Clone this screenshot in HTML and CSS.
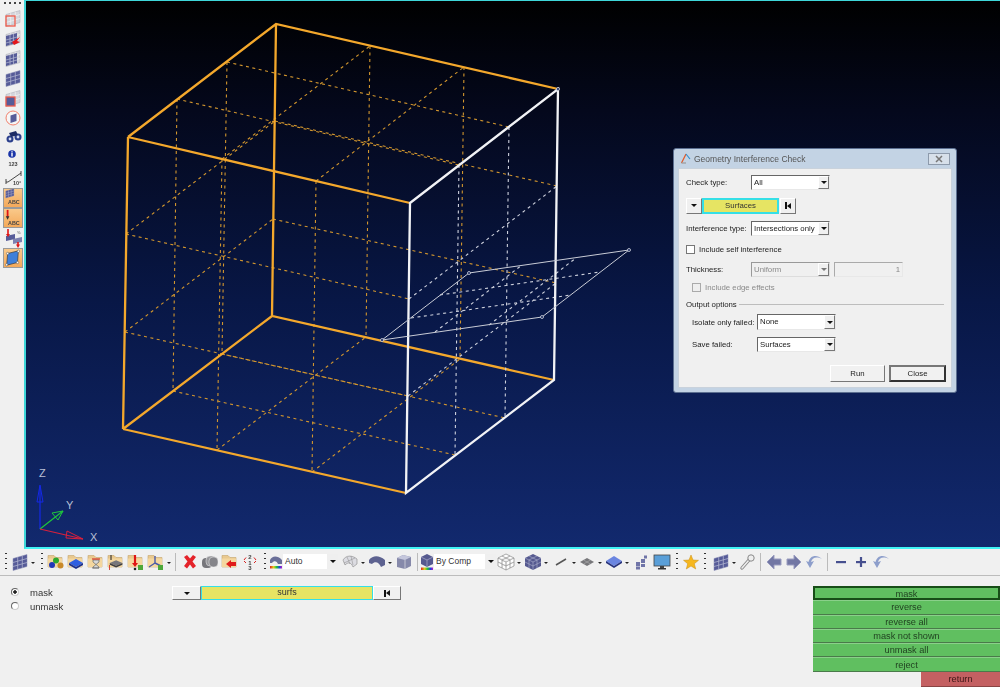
FILE: index.html
```html
<!DOCTYPE html>
<html lang="en">
<head>
<meta charset="utf-8">
<title>Geometry Interference Check</title>
<link rel="stylesheet" href="styles.css">
</head>
<body>
<svg class="defs" width="0" height="0" aria-hidden="true">
  <defs>
    <symbol id="mesh" viewBox="0 0 20 20">
      <path d="M3 6.500 17 2.500V14.500L3 18.500Z" fill="#565b98" stroke="#8b8fb5" stroke-width=".5"/>
      <path d="M7.700 5.200V17.200M12.300 3.800V15.800M3 10.500 17 6.500M3 14.500 17 10.500" stroke="#b8bbd4" stroke-width=".7" fill="none"/>
    </symbol>
    <symbol id="meshpale" viewBox="0 0 20 20">
      <path d="M3 6.500 17 2.500V14.500L3 18.500Z" fill="#d5d6dc" stroke="#a9abb5" stroke-width=".5"/>
      <path d="M7.700 5.200V17.200M12.300 3.800V15.800M3 10.500 17 6.500M3 14.500 17 10.500" stroke="#f4f4f4" stroke-width=".7" fill="none"/>
    </symbol>
    <symbol id="meshhalf" viewBox="0 0 20 20">
      <use href="#meshpale" width="20" height="20"/>
      <path d="M3 8 14 5V15L3 18Z" fill="#565b98"/>
      <path d="M7 7V17M10.500 6V16M3 12 14 9M3 15 14 12" stroke="#b8bbd4" stroke-width=".7" fill="none"/>
    </symbol>
    <symbol id="folder" viewBox="0 0 20 20">
      <path d="M2 3.500H8L10 5.500H16V15H2Z" fill="#e9c98f" stroke="#c5a56c" stroke-width=".6"/>
      <path d="M2 6.500H16V15H2Z" fill="#f4d79f"/>
    </symbol>
    <symbol id="block" viewBox="0 0 20 20">
      <path d="M2 10 9 7 16 10 9 13Z" fill="#77777c"/>
      <path d="M2 10V12L9 15 16 12V10L9 13Z" fill="#3f3f44"/>
    </symbol>
    <symbol id="caretdown" viewBox="0 0 6 20"><path d="M1 10H5L3 12Z" fill="#222"/></symbol>
    <symbol id="curve" viewBox="0 0 20 20">
      <path d="M18 7C12 4 8 6 7 10L10 9 6 16 2 9 4.500 10C6 3 13 2 18 7Z" fill="#8d9ecb"/>
    </symbol>
    <linearGradient id="rainbow"><stop offset="0" stop-color="#e02020"/><stop offset=".3" stop-color="#e0d020"/><stop offset=".55" stop-color="#20c040"/><stop offset=".8" stop-color="#2040e0"/><stop offset="1" stop-color="#c020c0"/></linearGradient>
  </defs>
</svg>

<div class="workspace">
  <aside class="sidebar">
    <div class="grip-h"></div>
    <svg class="side-ic" viewBox="0 0 20 20"><use href="#meshpale" width="20" height="20"/><rect x="3" y="8" width="9" height="10" fill="none" stroke="#ee5a4a" stroke-width="1.300"/></svg>
    <svg class="side-ic" viewBox="0 0 20 20"><use href="#meshhalf" width="20" height="20"/><path d="M9 14 17 9 14 13 17 14 11 17Z" fill="#e3161b"/></svg>
    <svg class="side-ic" viewBox="0 0 20 20"><use href="#meshhalf" width="20" height="20"/></svg>
    <svg class="side-ic" viewBox="0 0 20 20"><use href="#mesh" width="20" height="20"/></svg>
    <svg class="side-ic" viewBox="0 0 20 20"><use href="#meshpale" width="20" height="20"/><rect x="3" y="9" width="9" height="9" fill="#565b98" stroke="#ee5a4a" stroke-width="1.300"/></svg>
    <svg class="side-ic" viewBox="0 0 20 20"><circle cx="10" cy="10" r="7" fill="#f6f6f6" stroke="#f0806c" stroke-width="1"/><path d="M7.500 7.500 13.500 5.500V13L7.500 15Z" fill="#565b98"/></svg>
    <svg class="side-ic" viewBox="0 0 20 20"><circle cx="7" cy="11" r="3.500" fill="#2b3f8c"/><circle cx="15" cy="9" r="3.500" fill="#2b3f8c"/><path d="M6 5 13 3 15 7 8 9Z" fill="#1d2c66"/><circle cx="7" cy="11" r="1.400" fill="#d6dcf0"/><circle cx="15" cy="9" r="1.400" fill="#d6dcf0"/></svg>
    <svg class="side-ic" viewBox="0 0 20 20"><circle cx="9" cy="6" r="3.800" fill="#1a35a8"/><rect x="8.300" y="5" width="1.400" height="3.500" fill="#fff"/><rect x="8.300" y="3.300" width="1.400" height="1.200" fill="#fff"/><text x="10" y="17.500" class="svg-small" text-anchor="middle">123</text></svg>
    <svg class="side-ic" viewBox="0 0 20 20"><path d="M3 14H5L18 5" fill="none" stroke="#333" stroke-width=".9"/><path d="M3 11V16M18 3V8" stroke="#333" stroke-width=".9"/><text x="10" y="17" class="svg-small">10°</text></svg>
    <div class="side-btn"><svg viewBox="0 0 20 20"><use href="#mesh" x="0" y="-2" width="13" height="13"/><text x="11" y="17" class="svg-abc" text-anchor="middle">ABC</text></svg></div>
    <div class="side-btn"><svg viewBox="0 0 20 20"><path d="M4 1V9" stroke="#e01515" stroke-width="2"/><path d="M2 8H6L4 12Z" fill="#333"/><text x="11" y="18" class="svg-abc" text-anchor="middle">ABC</text></svg></div>
    <svg class="side-ic" viewBox="0 0 20 20"><path d="M3 8 12 6V11L3 13Z" fill="#565b98"/><path d="M10 11 19 9V14L10 16Z" fill="#7d81b0"/><path d="M5 1V7" stroke="#e01515" stroke-width="1.600"/><path d="M3 6H7L5 9Z" fill="#e01515"/><path d="M15 14V18" stroke="#e01515" stroke-width="1.600"/><path d="M13 16.500H17L15 20Z" fill="#e01515"/><text x="14" y="6" class="svg-tiny">%</text></svg>
    <div class="side-btn side-btn-tall"><svg viewBox="0 0 20 20"><path d="M4 5 16 2 15 15 3 18Z" fill="#3f7fd8" stroke="#333" stroke-width=".7"/><circle cx="4" cy="5" r="1.300" fill="#fff" stroke="#333" stroke-width=".5"/><circle cx="16" cy="2.500" r="1.300" fill="#fff" stroke="#333" stroke-width=".5"/><circle cx="15" cy="15" r="1.300" fill="#fff" stroke="#333" stroke-width=".5"/><circle cx="3" cy="17.500" r="1.300" fill="#fff" stroke="#333" stroke-width=".5"/></svg></div>
  </aside>

  <main class="viewport">
    <svg class="scene" viewBox="26 1 974 546" aria-label="Cube model with a plate surface">
      <g class="dash-orange">
        <path d="M222 159 370 46M316 181 464 67M177 99 459 165M227 62 509 127"/>
        <path d="M217 450 366 337M312 472 460 359M173 391 455 455M222 354 505 418"/>
        <path d="M222 159 217 450M316 181 312 472M126 234 409 299M125 332 408 396"/>
        <path d="M370 46 366 337M464 67 460 359M275 121 557 186M273 219 556 283"/>
        <path d="M177 99 173 391M227 62 222 354M126 234 275 121M125 332 273 219"/>
      </g>
      <g class="edge-orange">
        <path d="M128 137 276 24 558 89M128 137 410 203M128 137 123 429M276 24 272 316M123 429 406 493M123 429 272 316 554 380"/>
      </g>
      <g class="dash-white">
        <path d="M459 165 455 455M509 127 505 418M409 299 557 186M408 396 556 283"/>
        <path d="M411 318 571 295M440 295 600 272M435 332 522 265M489 325 576 258"/>
      </g>
      <g class="edge-white">
        <path d="M410 203 558 89 554 380 406 493ZM410 203 406 493"/>
      </g>
      <path class="plate" d="M382 340 469 273 629 250 542 317Z"/>
      <g class="vertex">
        <circle cx="382" cy="340" r="1.500"/><circle cx="469" cy="273" r="1.500"/><circle cx="629" cy="250" r="1.500"/><circle cx="542" cy="317" r="1.500"/><circle cx="558" cy="89" r="1.500"/>
      </g>
      <g class="axes">
        <path d="M40 529V486" class="axis-z"/><path d="M37 502 40 485 43 502Z" class="head-z"/>
        <path d="M40 529 63 511" class="axis-y"/><path d="M52 513 63 511 58 520Z" class="head-y"/>
        <path d="M40 529 83 539" class="axis-x"/><path d="M67 531 83 539 66 538Z" class="head-x"/>
        <text x="39" y="477" class="axis-label">Z</text>
        <text x="66" y="509" class="axis-label">Y</text>
        <text x="90" y="541" class="axis-label">X</text>
      </g>
    </svg>

    <section class="dialog">
      <header class="dialog-title">
        <svg class="dialog-logo" viewBox="0 0 12 12"><path d="M6 1 1.500 10" stroke="#e05a2a" stroke-width="1.300" fill="none"/><path d="M6 1 10 6" stroke="#2f8fd0" stroke-width="1.200" fill="none"/><path d="M1.500 10H6" stroke="#999" stroke-width="1.200"/></svg>
        <span class="dialog-name">Geometry Interference Check</span>
        <span class="dialog-close">
          <svg viewBox="0 0 10 8" class="dialog-x"><path d="M2 1 8 7M8 1 2 7" stroke="#777" stroke-width="1.500"/></svg>
        </span>
      </header>
      <div class="dialog-body">
        <div class="row row-1">
          <label class="lbl">Check type:</label>
          <div class="combo"><span class="combo-val">All</span><span class="combo-btn"><i class="tri"></i></span></div>
        </div>
        <div class="row row-picker">
          <span class="mini-btn mini-drop"><i class="tri"></i></span>
          <span class="picker">Surfaces</span>
          <span class="mini-btn mini-reset"><i class="bar"></i><i class="tri-left"></i></span>
        </div>
        <div class="row row-picker">
          <label class="lbl">Interference type:</label>
          <div class="combo"><span class="combo-val">Intersections only</span><span class="combo-btn"><i class="tri"></i></span></div>
        </div>
        <div class="row row-check">
          <span class="check"></span><span>Include self interference</span>
        </div>
        <div class="row row-thick">
          <label class="lbl">Thickness:</label>
          <div class="combo combo-off"><span class="combo-val">Uniform</span><span class="combo-btn"><i class="tri"></i></span></div>
          <span class="field-off">1</span>
        </div>
        <div class="row row-check2 off">
          <span class="check check-off"></span><span>Include edge effects</span>
        </div>
        <div class="row row-group"><span>Output options</span><span class="group-rule"></span></div>
        <div class="row row-sub row-iso">
          <label class="lbl">Isolate only failed:</label>
          <div class="combo combo-tall"><span class="combo-val">None</span><span class="combo-btn"><i class="tri"></i></span></div>
        </div>
        <div class="row row-sub row-save">
          <label class="lbl">Save failed:</label>
          <div class="combo"><span class="combo-val">Surfaces</span><span class="combo-btn"><i class="tri"></i></span></div>
        </div>
        <div class="row row-actions">
          <button class="push">Run</button>
          <button class="push push-default">Close</button>
        </div>
      </div>
    </section>
  </main>
</div>

<nav class="toolbar">
  <span class="grip"></span>
  <svg class="ic"><use href="#mesh" width="20" height="20"/></svg><svg class="cd"><use href="#caretdown" width="6" height="20"/></svg>
  <span class="grip m2"></span>
  <svg class="ic" viewBox="0 0 20 20"><use href="#folder" width="20" height="20"/><circle cx="10" cy="8.500" r="3" fill="#2da82d"/><circle cx="6" cy="13" r="3" fill="#2238b8"/><circle cx="14.500" cy="13.500" r="3" fill="#c98a2a"/></svg>
  <svg class="ic" viewBox="0 0 20 20"><use href="#folder" width="20" height="20"/><path d="M3 11 10 7 17 11 10 15Z" fill="#2f5fe0"/><path d="M3 11V13L10 17 17 13V11L10 15Z" fill="#1a2f8c"/></svg>
  <svg class="ic" viewBox="0 0 20 20"><use href="#folder" width="20" height="20"/><path d="M6 16H13M7 8H13V10L10 12.500 13 15V16H7V15L10 12.500 7 10Z" fill="#d8d8d8" stroke="#555" stroke-width=".6"/><path d="M6 7H14" stroke="#d4352a" stroke-width="1.200"/></svg>
  <svg class="ic" viewBox="0 0 20 20"><use href="#folder" width="20" height="20"/><use href="#block" y="2" x="2" width="18" height="18"/><path d="M5 3V8" stroke="#222" stroke-width="1"/><path d="M3.500 13V18" stroke="#d4352a" stroke-width=".9"/></svg>
  <svg class="ic" viewBox="0 0 20 20"><use href="#folder" width="20" height="20"/><path d="M9 3V12" stroke="#e01515" stroke-width="2.200"/><path d="M6 11H12L9 15Z" fill="#e01515"/><circle cx="9" cy="17" r="1.300" fill="#222"/><rect x="12" y="13" width="5" height="5" fill="#4da83a"/></svg>
  <svg class="ic" viewBox="0 0 20 20"><use href="#folder" width="20" height="20"/><path d="M9 4V11L3 15M9 11 15 14" stroke="#4a5aa8" stroke-width="1.400" fill="none"/><rect x="12" y="13" width="5" height="5" fill="#4da83a"/></svg>
  <svg class="cd"><use href="#caretdown" width="6" height="20"/></svg>
  <span class="sep"></span>
  <svg class="ic m2" viewBox="0 0 20 20"><path d="M4 5 7 3 10 6.500 13 3 16 5 12.500 9.500 16 14 13 16.500 10 12.500 7 16.500 4 14 7.500 9.500Z" fill="#e4232a"/></svg>
  <svg class="ic" viewBox="0 0 20 20"><rect x="2" y="6" width="10" height="10" rx="4" fill="#77777c"/><rect x="6" y="4" width="10" height="10" rx="4" fill="#98989c" stroke="#eee" stroke-width=".5"/><rect x="9" y="5" width="9" height="10" rx="4" fill="#85858a" stroke="#eee" stroke-width=".5"/></svg>
  <svg class="ic" viewBox="0 0 20 20"><use href="#folder" width="20" height="20"/><path d="M13 9H8V7L3 11 8 15V13H13Z" fill="#e01c1c" transform="translate(3 1)"/></svg>
  <svg class="ic" viewBox="0 0 20 20"><text x="10" y="7" class="svg-num" text-anchor="middle">2</text><text x="10" y="12.500" class="svg-num" text-anchor="middle">1</text><text x="10" y="18" class="svg-num" text-anchor="middle">3</text><path d="M4 8 6 5.500M16 8 14 5.500M4 9 6 11M16 9 14 11" stroke="#d82020" stroke-width="1"/></svg>
  <span class="grip m1"></span>
  <div class="tb-combo tb-auto">
    <svg class="tb-combo-ic" viewBox="0 0 14 20"><path d="M1 8C3 4 8 3 13 8L13 12 9 12C8 9 5 8 3 11L1 11Z" fill="#6a6f98"/><rect x="1" y="14" width="12" height="2.500" fill="url(#rainbow)"/></svg>
    <span class="tb-combo-val">Auto</span><span class="tb-combo-btn"><i class="tri"></i></span>
  </div>
  <svg class="ic m2" viewBox="0 0 20 20"><path d="M3 8C6 3 12 3 17 7L17 12 13 15C11 10 8 10 5 13Z" fill="#dcdce2" stroke="#888" stroke-width=".6"/><path d="M7 5 10 12M11 4 13 13M4 11 15 6" stroke="#888" stroke-width=".5" fill="none"/></svg><svg class="cd"><use href="#caretdown" width="6" height="20"/></svg>
  <svg class="ic m1" viewBox="0 0 20 20"><path d="M2 8C6 3 12 3 18 8L18 13 14 15C12 10 8 9 5 12L2 11Z" fill="#5d6290"/></svg><svg class="cd"><use href="#caretdown" width="6" height="20"/></svg>
  <svg class="ic m1" viewBox="0 0 20 20"><path d="M3 6 9 3 17 5V14L11 17 3 15Z" fill="#8689aa"/><path d="M3 6 11 8 17 5 9 3Z" fill="#c5c7dc"/><path d="M11 8V17" stroke="#eee" stroke-width=".6"/></svg>
  <span class="sep"></span>
  <div class="tb-combo tb-comp">
    <svg class="tb-combo-ic" viewBox="0 0 14 20"><path d="M1 5 7 2 13 5V12L7 15 1 12Z" fill="#55598f"/><path d="M1 5 7 8 13 5M7 8V15" stroke="#b8bbd4" stroke-width=".6" fill="none"/><rect x="1" y="15.500" width="12" height="2.500" fill="url(#rainbow)"/></svg>
    <span class="tb-combo-val">By Comp</span><span class="tb-combo-btn"><i class="tri"></i></span>
  </div>
  <svg class="ic" viewBox="0 0 20 20"><path d="M10 2 18 6V14L10 18 2 14V6ZM2 6 10 10 18 6M10 10V18M6 4 14 8V16M14 4 6 8V16M2 10 10 14 18 10" fill="#fff" stroke="#888" stroke-width=".7"/></svg><svg class="cd"><use href="#caretdown" width="6" height="20"/></svg>
  <svg class="ic m1" viewBox="0 0 20 20"><path d="M10 2 18 6V14L10 18 2 14V6Z" fill="#55598f"/><path d="M2 6 10 10 18 6M10 10V18M6 4 14 8V16M14 4 6 8V16M2 10 10 14 18 10" fill="none" stroke="#b0b3d0" stroke-width=".6"/></svg><svg class="cd"><use href="#caretdown" width="6" height="20"/></svg>
  <svg class="ic m2" viewBox="0 0 20 20"><path d="M5 13 15 7" stroke="#555" stroke-width="1.500"/></svg><svg class="cd"><use href="#caretdown" width="6" height="20"/></svg>
  <svg class="ic" viewBox="0 0 20 20"><path d="M3 10 10 6 17 10 10 14Z" fill="#77777a"/><path d="M6.500 8 13.500 12M13.500 8 6.500 12" stroke="#bbb" stroke-width=".5"/></svg><svg class="cd"><use href="#caretdown" width="6" height="20"/></svg>
  <svg class="ic m1" viewBox="0 0 20 20"><path d="M2 9 10 4 18 9 10 14Z" fill="#6a85e0"/><path d="M2 9V11L10 16 18 11V9L10 14Z" fill="#26327c"/></svg><svg class="cd"><use href="#caretdown" width="6" height="20"/></svg>
  <svg class="ic m1" viewBox="0 0 20 20"><g fill="#7075a8"><rect x="5" y="10" width="4" height="4"/><rect x="5" y="14.500" width="4" height="3"/><rect x="10" y="7" width="4" height="4"/><rect x="10" y="12" width="4" height="3"/><rect x="13" y="3.500" width="3" height="3"/></g></svg>
  <svg class="ic m1" viewBox="0 0 20 20"><rect x="2" y="3" width="16" height="11" fill="#5a9fd8" stroke="#444" stroke-width=".8"/><rect x="8" y="14" width="4" height="2" fill="#444"/><rect x="6" y="16" width="8" height="1.500" fill="#333"/></svg>
  <span class="grip m1"></span>
  <svg class="ic" viewBox="0 0 20 20"><path d="M10 3 12 8 17.500 8.300 13.300 11.700 14.700 17 10 14 5.300 17 6.700 11.700 2.500 8.300 8 8Z" fill="#f6b71e" stroke="#c98d10" stroke-width=".5"/></svg>
  <span class="grip"></span>
  <svg class="ic m2"><use href="#mesh" width="20" height="20"/></svg><svg class="cd"><use href="#caretdown" width="6" height="20"/></svg>
  <svg class="ic" viewBox="0 0 20 20"><path d="M5 16 12 8M5 16" stroke="#888" stroke-width="3.400" stroke-linecap="round"/><path d="M5 16 12 8" stroke="#eee" stroke-width="1.500" stroke-linecap="round"/><circle cx="14" cy="6" r="3.200" fill="#eee" stroke="#888" stroke-width="1"/></svg>
  <span class="sep"></span>
  <svg class="ic m1" viewBox="0 0 20 20"><path d="M3 10 10 3V7H17V13H10V17Z" fill="#7277a4" stroke="#9a9dc0" stroke-width="1" stroke-linejoin="round"/></svg>
  <svg class="ic" viewBox="0 0 20 20"><path d="M17 10 10 3V7H3V13H10V17Z" fill="#7277a4" stroke="#9a9dc0" stroke-width="1" stroke-linejoin="round"/></svg>
  <svg class="ic"><use href="#curve" width="20" height="20"/></svg>
  <span class="sep"></span>
  <svg class="ic m1" viewBox="0 0 20 20"><rect x="5" y="9" width="10" height="2.200" fill="#47508f"/></svg>
  <svg class="ic" viewBox="0 0 20 20"><rect x="5" y="9" width="10" height="2.200" fill="#47508f"/><rect x="8.900" y="5" width="2.200" height="10" fill="#47508f"/></svg>
  <svg class="ic"><use href="#curve" width="20" height="20"/></svg>
</nav>

<section class="panel">
  <div class="radios">
    <div class="radio-row"><span class="radio radio-on"></span><span>mask</span></div>
    <div class="radio-row"><span class="radio"></span><span>unmask</span></div>
  </div>
  <div class="panel-picker">
    <span class="mini-btn panel-drop"><i class="tri"></i></span>
    <span class="picker panel-yellow">surfs</span>
    <span class="mini-btn panel-reset"><i class="bar"></i><i class="tri-left"></i></span>
  </div>
  <div class="menu">
    <button class="menu-item menu-active">mask</button>
    <button class="menu-item">reverse</button>
    <button class="menu-item">reverse all</button>
    <button class="menu-item">mask not shown</button>
    <button class="menu-item">unmask all</button>
    <button class="menu-item">reject</button>
    <button class="menu-return">return</button>
  </div>
</section>
</body>
</html>
```
FILE: styles.css
```css
* { box-sizing: border-box; }
html, body { margin: 0; padding: 0; }
body {
  width: 1000px;
  height: 687px;
  overflow: hidden;
  background: #f0f0f0;
  font-family: "Liberation Sans", Arial, sans-serif;
  font-size: 9.500px;
  color: #333;
}
.defs { position: absolute; }

.workspace { display: flex; height: 549px; }

/* left strip */
.sidebar {
  width: 24px;
  display: flex;
  flex-direction: column;
  align-items: center;
  padding-left: 2px;
  filter: blur(.3px);
}
.grip-h {
  width: 18px;
  height: 8px;
  flex: none;
  background: radial-gradient(circle at 1px 3px, #444 1px, transparent 1.100px) 0 0 / 5px 8px repeat-x;
}
.side-ic { width: 20px; height: 20px; flex: none; display: block; }
.side-btn {
  width: 20px;
  height: 20px;
  flex: none;
  background: linear-gradient(#f9c98a, #f4a95a);
  border: 1px solid #9a9a9a;
  padding: 0;
}
.side-btn svg { width: 18px; height: 18px; display: block; }
.svg-small { font: 5.500px "Liberation Sans", sans-serif; font-weight: 700; fill: #444; }
.svg-abc { font: 700 6px "Liberation Sans", sans-serif; fill: #444; }
.svg-tiny { font: 4px "Liberation Sans", sans-serif; fill: #555; }
.svg-num { font: 700 6px "Liberation Sans", sans-serif; fill: #444; }

/* 3D viewport */
.viewport {
  position: relative;
  width: 976px;
  height: 549px;
  border: solid #3ed6d8;
  border-width: 1px 0 2px 2px;
  border-bottom-color: #40f4f6;
  background: linear-gradient(#000 0%, #04081c 20%, #081746 55%, #12296e 100%);
}
.scene { display: block; width: 100%; height: 100%; }
.edge-orange path { fill: none; stroke: #f4a82c; stroke-width: 2.300; }
.edge-white path { fill: none; stroke: #f2f3f6; stroke-width: 2.300; }
.dash-orange path { fill: none; stroke: #d2962e; stroke-width: 1.100; stroke-dasharray: 3 3.500; }
.dash-white path { fill: none; stroke: #cdd0dc; stroke-width: 1.100; stroke-dasharray: 3 3.500; }
.plate { fill: none; stroke: #c9ccd6; stroke-width: 1; }
.vertex circle { fill: #0b1c55; stroke: #d6d8e0; stroke-width: .8; }
.axis-z { stroke: #1428e6; fill: none; stroke-width: 1.200; }
.head-z { fill: none; stroke: #1428e6; stroke-width: 1; }
.axis-y { stroke: #1ec83c; fill: none; stroke-width: 1.200; }
.head-y { fill: none; stroke: #1ec83c; stroke-width: 1; }
.axis-x { stroke: #d8203c; fill: none; stroke-width: 1.200; }
.head-x { fill: none; stroke: #d8203c; stroke-width: 1; }
.axis-label { font: 11px "Liberation Sans", sans-serif; fill: #b9c0d6; }

/* floating dialog */
.dialog {
  position: absolute;
  left: 647px;
  top: 147px;
  width: 284px;
  height: 245px;
  background: #c3d3e4;
  border: 1px solid #5c6f90;
  border-radius: 3px;
  padding: 0 4px 4px;
  display: flex;
  flex-direction: column;
  font-size: 7.800px;
  filter: blur(.25px);
}
.dialog-title {
  height: 19px;
  flex: none;
  display: flex;
  align-items: center;
  padding-left: 2px;
  gap: 2px;
}
.dialog-logo { width: 12px; height: 12px; flex: none; }
.dialog-name { font-size: 8.500px; color: #555; }
.dialog-close {
  margin-left: auto;
  margin-right: 2px;
  width: 22px;
  height: 12px;
  border: 1px solid #8d9aab;
  background: #d7e0ea;
  display: flex;
  align-items: center;
  justify-content: center;
}
.dialog-x { width: 10px; height: 8px; display: block; }
.dialog-body {
  flex: 1;
  background: #f0f0f0;
  border: 1px solid #c9d2dc;
  padding: 6px 7px 0;
}
.row { display: flex; align-items: center; height: 15px; color: #222; }
.lbl { width: 65px; flex: none; }
.row-picker { margin-top: 8px; }
.row-check { margin-top: 6px; height: 14px; gap: 4px; }
.row-thick { margin-top: 6px; }
.row-check2 { margin-top: 3px; height: 14px; gap: 4px; padding-left: 6px; }
.off { color: #8a8a8a; }
.row-group { margin-top: 4px; height: 12px; gap: 2px; }
.group-rule { flex: 1; height: 1px; background: #bdbdbd; }
.row-sub { padding-left: 6px; }
.row-iso { margin-top: 4px; height: 16px; }
.row-save { margin-top: 7px; }
.row-actions { margin: 13px -2px 0 0; height: 17px; justify-content: flex-end; gap: 4px; }

.combo {
  width: 79px;
  height: 15px;
  flex: none;
  display: flex;
  background: #fff;
  border: 1px solid;
  border-color: #666 #e8e8e8 #e8e8e8 #666;
}
.combo-tall { height: 16px; }
.combo-val { flex: 1; padding-left: 2px; line-height: 13px; color: #222; white-space: nowrap; overflow: hidden; }
.combo-btn {
  width: 11px;
  background: #f0f0f0;
  border: 1px solid;
  border-color: #fff #777 #777 #fff;
  display: flex;
  align-items: center;
  justify-content: center;
}
.combo-off { background: #f0f0f0; border-color: #999 #ddd #ddd #999; }
.combo-off .combo-val { color: #8a8a8a; }
.combo-off .tri { border-top-color: #777; }
.field-off {
  width: 69px;
  height: 15px;
  margin-left: 4px;
  flex: none;
  border: 1px solid;
  border-color: #aaa #e8e8e8 #e8e8e8 #aaa;
  text-align: right;
  line-height: 13px;
  padding-right: 2px;
  color: #888;
}
.tri {
  display: block;
  width: 0;
  height: 0;
  border: 3px solid transparent;
  border-top: 3px solid #111;
  border-bottom: 0;
}
.tri-left {
  display: block;
  width: 0;
  height: 0;
  border: 3.500px solid transparent;
  border-right: 4px solid #111;
  border-left: 0;
}
.bar { display: block; width: 2px; height: 7px; background: #111; }
.check {
  width: 9px;
  height: 9px;
  flex: none;
  background: #fff;
  border: 1px solid #777;
}
.check-off { background: #eee; border-color: #aaa; }
.mini-btn {
  display: flex;
  align-items: center;
  justify-content: center;
  background: #f0f0f0;
  border: 1px solid;
  border-color: #fff #777 #777 #fff;
}
.mini-drop { width: 16px; height: 16px; }
.mini-reset { width: 16px; height: 16px; margin-left: 1px; }
.picker {
  background: #e6e463;
  border: 2px solid #35dfe6;
  text-align: center;
  color: #333;
}
.row-picker .picker { width: 77px; height: 16px; line-height: 12px; }
.push {
  width: 55px;
  height: 17px;
  padding: 0;
  font: inherit;
  color: #222;
  background: #f1f1f1;
  border: 1px solid;
  border-color: #fff #777 #777 #fff;
}
.push-default { width: 57px; border: 2px solid #555; border-color: #777 #333 #333 #777; }

/* main toolbar */
.toolbar {
  height: 27px;
  display: flex;
  align-items: center;
  padding: 0 0 1px 2px;
  border-bottom: 1px solid #bcbcbc;
  filter: blur(.3px);
}
.ic { width: 20px; height: 20px; flex: none; display: block; }
.cd { width: 6px; height: 20px; flex: none; display: block; }
.sep { width: 6px; height: 18px; flex: none; background: linear-gradient(#bbb, #bbb) center / 1px 100% no-repeat; }
.grip {
  width: 8px;
  height: 20px;
  flex: none;
  background: radial-gradient(circle at 4px 1.500px, #333 .9px, transparent 1.100px) 0 0 / 8px 5px repeat-y;
}
.m1 { margin-left: 1px; }
.m2 { margin-left: 2px; }
.tb-combo { display: flex; align-items: center; height: 20px; flex: none; }
.tb-auto { width: 69px; }
.tb-comp { width: 76px; }
.tb-combo-ic { width: 14px; height: 20px; flex: none; }
.tb-combo-val {
  flex: 1;
  background: #fff;
  height: 15px;
  line-height: 15px;
  padding-left: 2px;
  font-size: 8.500px;
  color: #333;
}
.tb-combo-btn {
  width: 11px;
  height: 15px;
  background: #efefef;
  display: flex;
  align-items: center;
  justify-content: center;
}

/* lower panel */
.panel { position: relative; height: 111px; display: flex; filter: blur(.25px); }
.radios { width: 172px; padding: 9px 0 0 11px; flex: none; }
.radio-row { display: flex; align-items: center; gap: 11px; height: 14px; }
.radio {
  width: 8px;
  height: 8px;
  border-radius: 50%;
  border: 1px solid #666;
  border-right-color: #ccc;
  border-bottom-color: #ccc;
  background: #fff;
  flex: none;
}
.radio-on { background: radial-gradient(circle, #222 1.500px, #fff 1.900px); }
.panel-picker { display: flex; height: 14px; margin-top: 10px; flex: none; font-size: 9px; }
.panel-drop { width: 29px; height: 14px; }
.panel-yellow { width: 172px; height: 14px; line-height: 11px; border-width: 1.500px; }
.panel-reset { width: 28px; height: 14px; }
.menu {
  position: absolute;
  right: 0;
  top: 10px;
  width: 187px;
  display: flex;
  flex-direction: column;
  font-size: 9.200px;
}
.menu-item {
  height: 14.300px;
  padding: 0;
  font: inherit;
  color: #1f3f1f;
  background: #60bf60;
  border: 0;
  border-bottom: 1px solid #4a7a4a;
  border-top: 1px solid #8ad08a;
  line-height: 12px;
}
.menu-active { border: 2px solid #174d17; }
.menu-return {
  align-self: flex-end;
  width: 79px;
  height: 15px;
  padding: 0;
  font: inherit;
  color: #3d1616;
  background: #c46062;
  border: 0;
  border-bottom: 1px solid #8a4444;
}
```
